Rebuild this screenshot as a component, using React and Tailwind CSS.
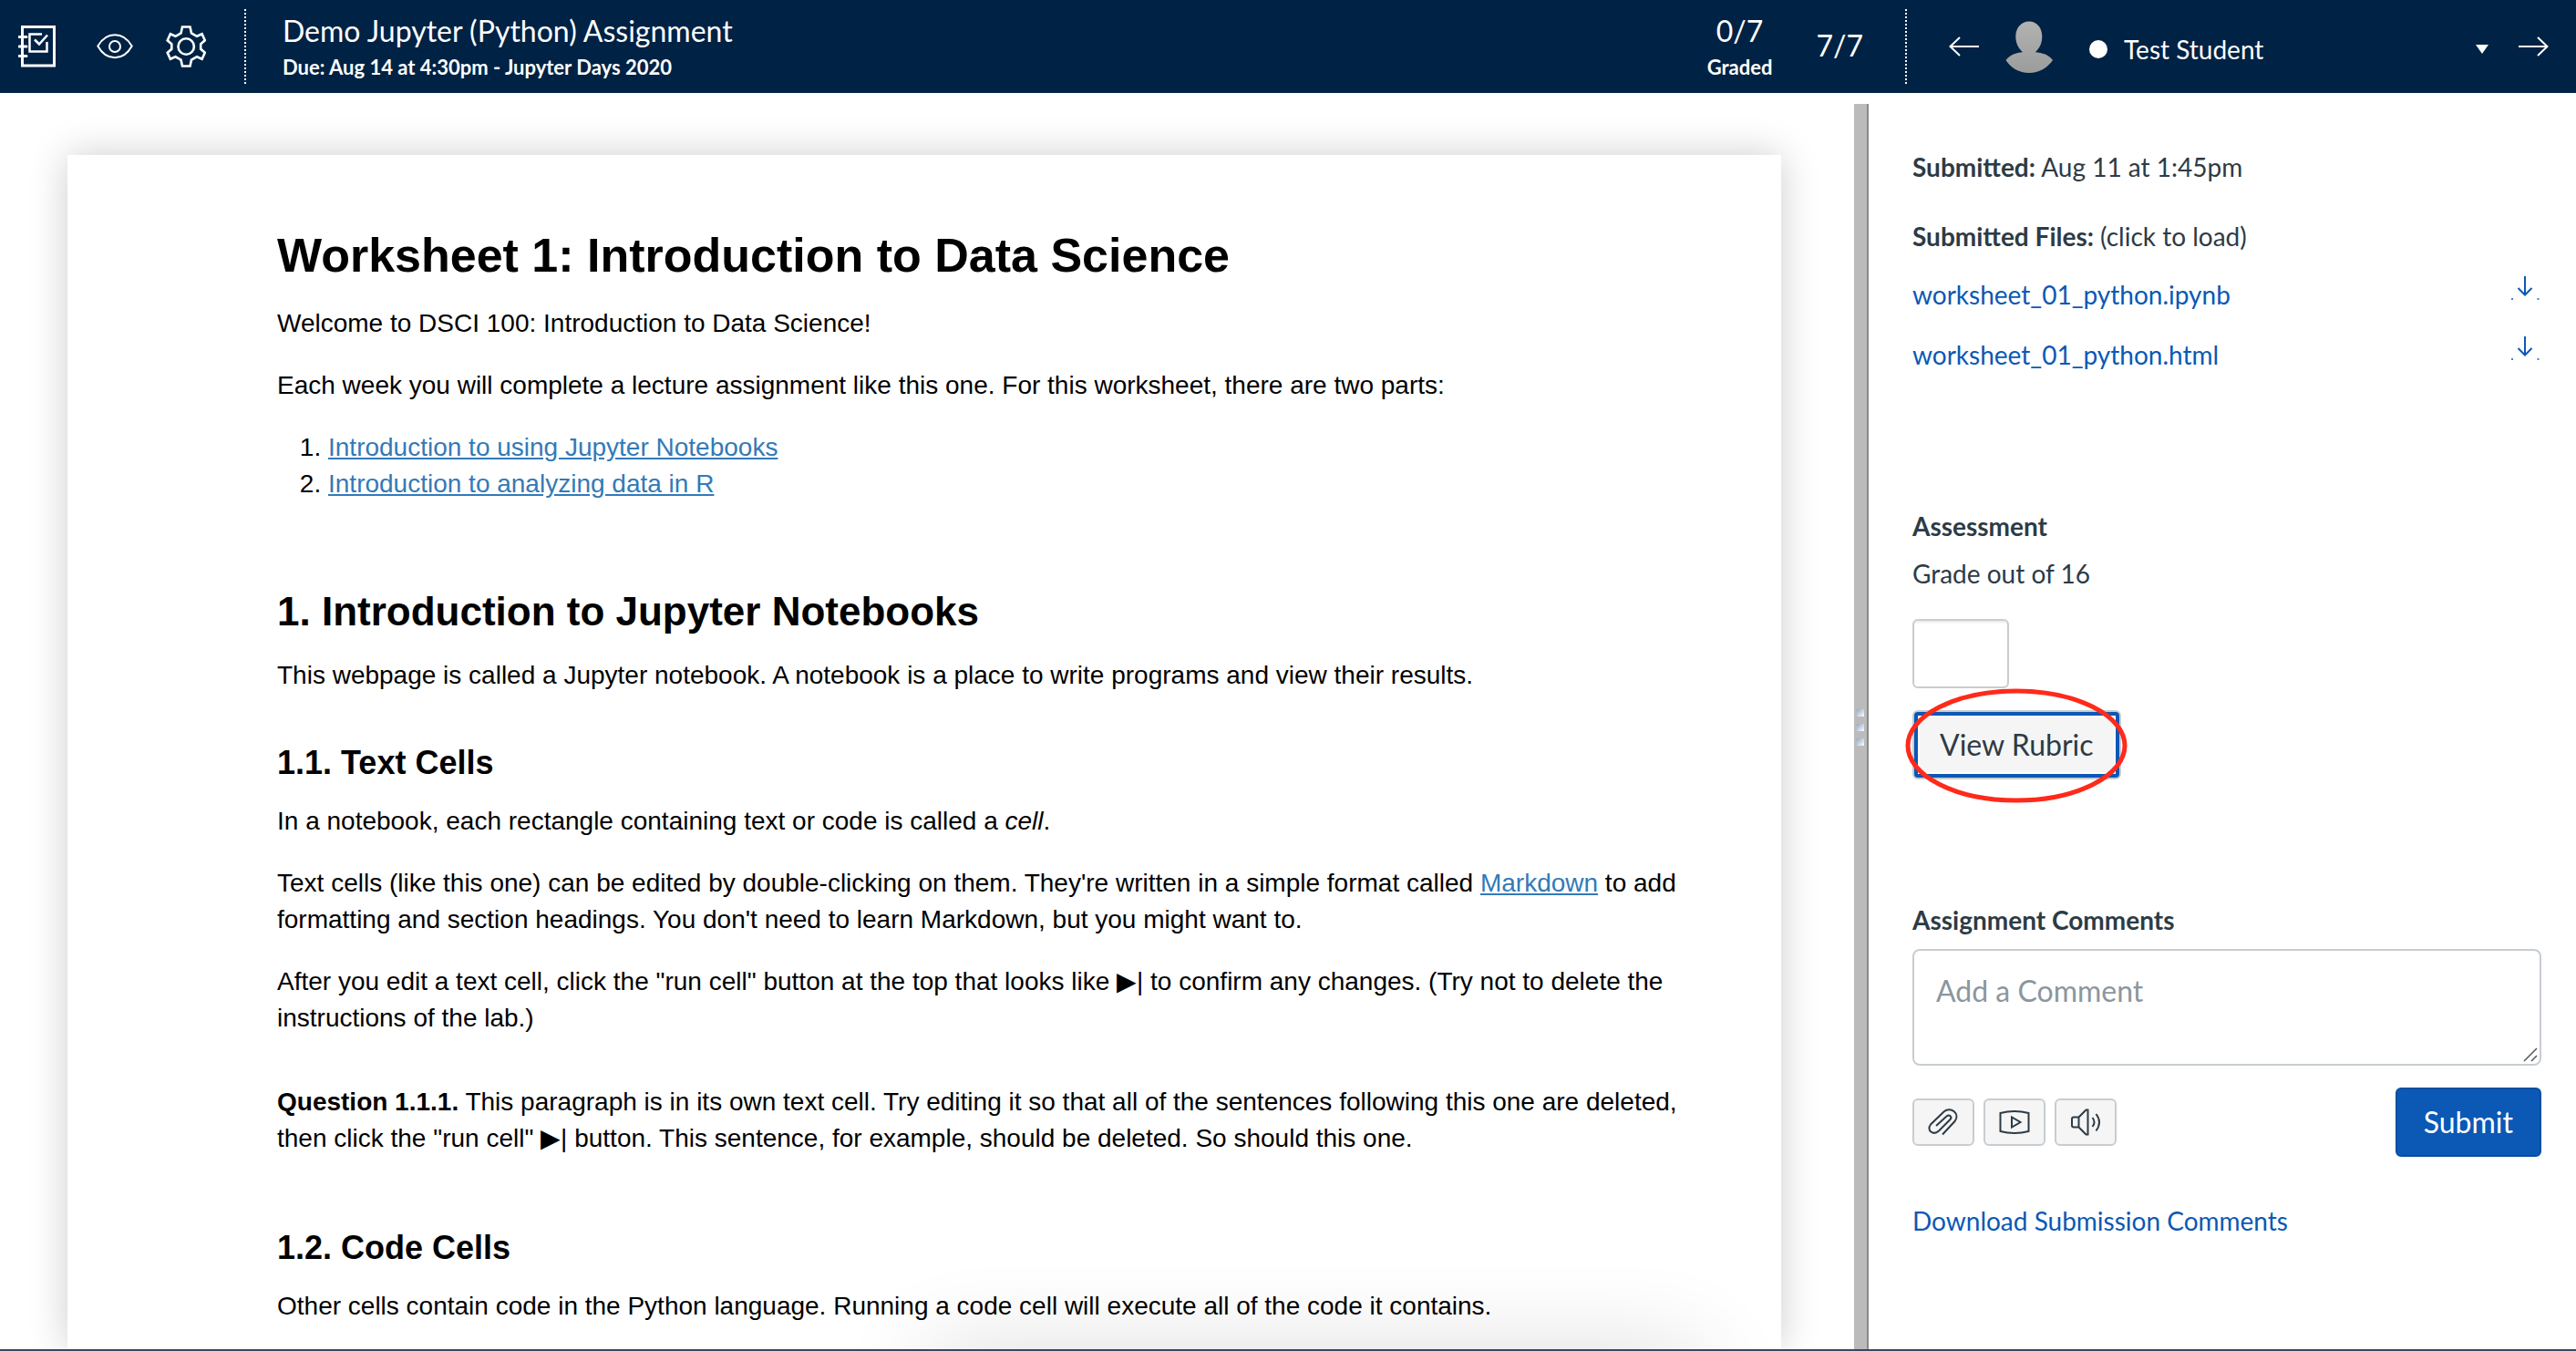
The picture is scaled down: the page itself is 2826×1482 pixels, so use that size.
const files = ["worksheet_01_python.ipynb", "worksheet_01_python.html"];

function GradebookIcon() {
  return (
    <svg className="h-[46px] w-[42px]" viewBox="0 0 42 46" fill="none" stroke="currentColor" strokeWidth="3" aria-hidden="true">
      <path d="M4.500 1.500h35v42.500h-35z" />
      <path d="M1 12.500h8M1 23h8M1 33.500h8" strokeLinecap="round" />
      <path d="M26 9.500H12.500V28.500H31.500V18" strokeWidth="2.500" />
      <path d="M18 15.500l5 5 9-10" strokeWidth="2.500" />
    </svg>
  );
}

function EyeIcon() {
  return (
    <svg className="h-[28px] w-[40px]" viewBox="0 0 40 28" fill="none" stroke="currentColor" strokeWidth="2" aria-hidden="true">
      <path d="M1.300 13.500C6 5.500 12.500 1.300 20 1.300S34 5.500 38.700 13.500C34 22 27.500 26.200 20 26.200S6 22 1.300 13.500Z" />
      <circle cx="20" cy="14" r="6" />
    </svg>
  );
}

function GearIcon() {
  return (
    <svg className="h-[46px] w-[44px]" viewBox="0 0 44 46" fill="none" stroke="currentColor" strokeWidth="2.600" aria-hidden="true">
      <path d="M18 1.500h8.500l1.500 7 6 3.300 5.600-2.500 3.200 7-4.600 4v5.500l4.600 4-3.200 7-5.600-2.500-6 3.300-1.500 6.900H18l-1.500-6.900-6-3.300-5.600 2.500-3.200-7 4.600-4v-5.500l-4.600-4 3.200-7 5.600 2.500 6-3.300z" />
      <circle cx="22.200" cy="23" r="8.700" />
    </svg>
  );
}

function Arrow({ className }) {
  return (
    <svg className={className} viewBox="0 0 34 22" fill="none" stroke="currentColor" strokeWidth="2" aria-hidden="true">
      <path d="M33 11H1.500M12 1L1.500 11L12 21" />
    </svg>
  );
}

function Avatar() {
  return (
    <svg className="h-[58px] w-[52px]" viewBox="0 0 52 58" aria-hidden="true">
      <defs>
        <linearGradient id="avatar-fill" x1="0" y1="0" x2="0" y2="1">
          <stop offset="0" stopColor="#b2b2b2" />
          <stop offset="1" stopColor="#9c9c9c" />
        </linearGradient>
      </defs>
      <path
        fill="url(#avatar-fill)"
        d="M26 0.500C34.500 0.500 40.300 7.500 40.300 17C40.300 25 37 30.500 32.800 34.300C40 35 48 37 52 43C46 51.500 37 57 26 57S6 51.500 0.500 43C5 37 12 35 19 34.300C14.800 30.500 11.300 25 11.300 17C11.300 7.500 17.500 0.500 26 0.500Z"
      />
    </svg>
  );
}

function DownloadIcon() {
  return (
    <svg className="h-7 w-[34px]" viewBox="0 0 34 28" fill="none" stroke="currentColor" strokeWidth="2" aria-hidden="true">
      <path d="M16 0v20M8.500 13l7.500 7.500 7.500-7.500" />
      <path d="M1 25h2M29.500 25h2" strokeWidth="1.500" />
    </svg>
  );
}

function ClipIcon() {
  return (
    <svg className="h-[32px] w-[34px]" viewBox="0 0 34 32" fill="none" stroke="currentColor" strokeWidth="2" aria-hidden="true">
      <path d="M9 20L20.500 9.500C23.500 7 27 10 24.500 13L12 25.500C6 31 -2 25 3 18.500L17.500 4.500C25 -2 36 7 29.500 15L16 29.500" />
    </svg>
  );
}

function MediaIcon() {
  return (
    <svg className="h-[26px] w-[34px]" viewBox="0 0 34 26" fill="none" stroke="currentColor" strokeWidth="2" aria-hidden="true">
      <path d="M1.500 3Q17 -1 32.500 3V23Q17 27 1.500 23Z" />
      <path d="M14 7.500V18.500L23.500 13Z" />
    </svg>
  );
}

function SpeakerIcon() {
  return (
    <svg className="h-[30px] w-[34px]" viewBox="0 0 34 30" fill="none" stroke="currentColor" strokeWidth="2" aria-hidden="true">
      <path d="M9.500 9.500L17.500 1.500H19.500V28.500H17.500L9.500 20.500M9.500 9.500V20.500H4Q2 20.500 2 18.500V11.500Q2 9.500 4 9.500Z" />
      <path d="M24.500 10Q28.500 15 24.500 20M28.500 6Q35.500 15 28.500 24.500" />
    </svg>
  );
}

function Header() {
  return (
    <header className="flex h-[102px] shrink-0 bg-[#002244] text-white">
      <div className="flex min-w-0 flex-1 py-2.5">
        <nav className="flex w-[268px] shrink-0 items-center pl-5">
          <button type="button" aria-label="Gradebook"><GradebookIcon /></button>
          <button type="button" aria-label="Toggle student names" className="ml-11"><EyeIcon /></button>
          <button type="button" aria-label="Settings" className="ml-9"><GearIcon /></button>
        </nav>
        <div className="min-w-0 flex-1 border-l-2 border-dotted border-white pl-10 pt-1">
          <h1 className="text-[32px] leading-10">Demo Jupyter (Python) Assignment</h1>
          <p className="pt-1 text-[22px] font-bold leading-8">Due: Aug 14 at 4:30pm - Jupyter Days 2020</p>
        </div>
        <div className="pt-1 text-center">
          <p className="text-[32px] leading-10">0/7</p>
          <p className="pt-1 text-[22px] font-bold leading-8">Graded</p>
        </div>
        <p className="ml-12 mr-[46px] pt-5 text-[32px] leading-10">7/7</p>
      </div>
      <div className="flex w-[736px] shrink-0 py-2.5">
        <div className="flex flex-1 border-l-2 border-dotted border-white pl-[46px] pr-[30px]">
          <button type="button" aria-label="Previous student"><Arrow className="h-[22px] w-[34px]" /></button>
          <div className="ml-7 pt-[13px]"><Avatar /></div>
          <span className="ml-10 mt-[34px] h-5 w-5 rounded-full bg-white" />
          <div className="relative ml-[18px] flex-1 pt-6">
            <select aria-label="Student" className="h-10 w-full appearance-none bg-transparent text-[28px] leading-10">
              <option>Test Student</option>
            </select>
            <svg className="pointer-events-none absolute right-0 top-[39px] h-2.5 w-3.5" viewBox="0 0 14 10" fill="currentColor" aria-hidden="true">
              <path d="M0 0h14L7 10z" />
            </svg>
          </div>
          <button type="button" aria-label="Next student" className="ml-8"><Arrow className="h-[22px] w-[34px] rotate-180" /></button>
        </div>
      </div>
    </header>
  );
}

function Worksheet() {
  const link = "text-[#337ab7] underline";
  const h3 = "mb-[26px] text-[36px] font-bold leading-9";
  return (
    <article className="ml-[74px] mr-20 mt-[68px] flex-1 bg-white pl-[230px] pr-20 pt-[84px] font-['Liberation_Sans',Arial,sans-serif] text-[28px] leading-10 text-black shadow-[0_0_40px_rgba(0,0,0,0.2)]">
      <h1 className="mb-[29px] text-[52px] font-bold leading-[52px]">Worksheet 1: Introduction to Data Science</h1>
      <p>Welcome to DSCI 100: Introduction to Data Science!</p>
      <p className="mt-7">Each week you will complete a lecture assignment like this one. For this worksheet, there are two parts:</p>
      <ol className="mt-7 list-decimal pl-14">
        <li><a href="#jupyter" className={link}>Introduction to using Jupyter Notebooks</a></li>
        <li><a href="#analyzing" className={link}>Introduction to analyzing data in R</a></li>
      </ol>
      <h2 id="jupyter" className="mt-[98px] text-[44px] font-bold leading-[44px]">1. Introduction to Jupyter Notebooks</h2>
      <p className="mt-7">This webpage is called a Jupyter notebook. A notebook is a place to write programs and view their results.</p>
      <h3 className={"mt-[58px] " + h3}>1.1. Text Cells</h3>
      <p>In a notebook, each rectangle containing text or code is called a <em>cell</em>.</p>
      <p className="mt-7">
        Text cells (like this one) can be edited by double-clicking on them. They're written in a simple format called{" "}
        <a href="#markdown" className={link}>Markdown</a> to add formatting and section headings. You don't need to learn Markdown, but you might want to.
      </p>
      <p className="mt-7">
        After you edit a text cell, click the "run cell" button at the top that looks like ▶| to confirm any changes. (Try not to delete the instructions of the lab.)
      </p>
      <p className="mt-[52px]">
        <strong>Question 1.1.1.</strong> This paragraph is in its own text cell. Try editing it so that all of the sentences following this one are deleted, then click the "run cell" ▶| button. This sentence, for example, should be deleted. So should this one.
      </p>
      <h3 className={"mt-[82px] " + h3}>1.2. Code Cells</h3>
      <p>Other cells contain code in the Python language. Running a code cell will execute all of the code it contains.</p>
    </article>
  );
}

function Divider() {
  return (
    <div role="separator" aria-orientation="vertical" className="mt-3 flex w-4 shrink-0 flex-col items-center gap-2 border-r-2 border-[#888888] bg-[#bbbbbb] pt-[664px]">
      <span className="h-2 w-2 bg-linear-to-br from-[#8fa9cc] to-white" />
      <span className="h-2 w-2 bg-linear-to-br from-[#8fa9cc] to-white" />
      <span className="h-2 w-2 bg-linear-to-br from-[#8fa9cc] to-white" />
    </div>
  );
}

function Sidebar() {
  const tool = "flex h-[52px] w-[68px] items-center justify-center rounded-md border-2 border-[#c7cdd1] bg-[#f5f5f5]";
  return (
    <aside className="w-[776px] shrink-0 pl-12 pr-[38px] pt-[61px] text-[28px] leading-10 text-[#2d3b45]">
      <p><strong>Submitted:</strong> Aug 11 at 1:45pm</p>
      <p className="mt-9"><strong>Submitted Files:</strong> (click to load)</p>
      <ul className="mt-6 flex flex-col gap-[26px] text-[#0b58b5]">
        {files.map((name) => (
          <li key={name} className="flex items-start justify-between">
            <a href={"#" + name}>{name}</a>
            <a href={"#download-" + name} aria-label={"Download " + name}><DownloadIcon /></a>
          </li>
        ))}
      </ul>
      <h2 className="mt-[148px] font-bold">Assessment</h2>
      <label htmlFor="grade" className="mt-3 block">Grade out of 16</label>
      <input id="grade" type="text" className="mt-[30px] block h-[76px] w-[106px] rounded-md border-2 border-[#cccccc] px-4 shadow-[inset_0_2px_2px_rgba(0,0,0,0.08)]" />
      <div className="relative mt-6 w-fit">
        <button type="button" className="block h-[76px] rounded-md border-2 border-[#c7cdd1] bg-[#0b58b5] p-1 text-[32px]">
          <span className="flex h-full items-center border-2 border-white bg-[#f5f5f5] px-[22px]">View Rubric</span>
        </button>
        <svg className="pointer-events-none absolute -left-2 -top-6 h-[126px] w-[244px]" viewBox="0 0 244 126" fill="none" aria-hidden="true">
          <ellipse cx="122" cy="63" rx="119" ry="60" stroke="#ff2a1a" strokeWidth="5" />
        </svg>
      </div>
      <label htmlFor="comment" className="mt-[134px] block font-bold">Assignment Comments</label>
      <div className="relative mt-3">
        <textarea id="comment" placeholder="Add a Comment" className="block h-32 w-full resize-none rounded-lg border-2 border-[#c7cdd1] px-6 py-6 text-[32px] leading-10 placeholder:text-[#8b969e]" />
        <svg className="pointer-events-none absolute bottom-1 right-1 h-4 w-4" viewBox="0 0 16 16" stroke="#555555" strokeWidth="1.500" aria-hidden="true">
          <path d="M1 15L15 1M9 15L15 9" />
        </svg>
      </div>
      <div className="mt-6 flex items-center gap-2.5">
        <button type="button" aria-label="Attach file" className={tool}><ClipIcon /></button>
        <button type="button" aria-label="Media comment" className={tool}><MediaIcon /></button>
        <button type="button" aria-label="Speech comment" className={tool}><SpeakerIcon /></button>
        <button type="submit" className="ml-auto h-[76px] rounded-md border-2 border-[#0a4f9f] bg-[#0b58b5] px-[29px] text-[32px] text-white">Submit</button>
      </div>
      <a href="#comments" className="mt-[50px] block text-[#0b58b5]">Download Submission Comments</a>
    </aside>
  );
}

export default function App() {
  return (
    <div className="relative flex h-screen flex-col overflow-hidden bg-white font-[Lato,sans-serif]">
      <Header />
      <main className="flex min-h-0 flex-1">
        <section className="flex min-w-0 flex-1 flex-col overflow-hidden">
          <Worksheet />
        </section>
        <Divider />
        <Sidebar />
      </main>
      <div className="relative h-0.5 shrink-0 bg-[#3a4760]">
        <div className="absolute left-[36%] right-[34%] top-0 h-20 shadow-[0_0_100px_rgba(0,0,0,0.14)]" />
      </div>
    </div>
  );
}
